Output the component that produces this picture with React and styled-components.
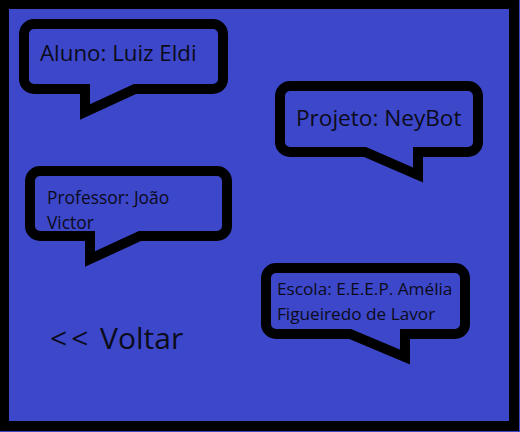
import React from 'react'
import styled, { createGlobalStyle } from 'styled-components'

const BLUE = '#3d47c9'

const GlobalStyle = createGlobalStyle`
  html, body {
    margin: 0;
    padding: 0;
    background: ${BLUE};
  }
  body {
    font-family: 'Open Sans', 'Noto Sans', sans-serif;
    color: #0b0b1a;
  }
`

const Frame = styled.div`
  position: relative;
  box-sizing: border-box;
  width: 519px;
  height: 431px;
  border-style: solid;
  border-color: #000;
  border-width: 9px 10px 10px 9px;
  background: ${BLUE};
`

const BubbleBox = styled.div`
  position: absolute;
  left: ${props => props.$x}px;
  top: ${props => props.$y}px;
  width: ${props => props.$w}px;
  height: ${props => props.$h}px;
  box-sizing: border-box;
  padding: ${props => props.$padTop}px 0 0 ${props => props.$padLeft}px;
`

const Outline = styled.svg`
  position: absolute;
  left: 0;
  top: 0;
  overflow: visible;
`

const Say = styled.p`
  position: relative;
  margin: 0;
  width: ${props => props.$textWidth}px;
  font-size: ${props => props.$size}px;
  line-height: ${props => props.$lh}px;
`

const BackLink = styled.a`
  position: absolute;
  left: 41px;
  top: 311px;
  font-size: 30px;
  line-height: 36px;
  color: #0b0b1a;
  text-decoration: none;
  cursor: pointer;
`

const Arrows = styled.span`
  letter-spacing: 4px;
`

// rect = centerline of the outline; tail = [rightJoin, tipX, tipY, leftJoin]
function Bubble({ rect, tail, text, children }) {
  const [rx, ry, rw, rh] = rect
  const ox = rx - 5
  const oy = ry - 5
  const r = 10
  const R = 5 + rw
  const B = 5 + rh
  const [a, tx, ty, b] = tail
  const d = [
    `M ${5 + r} 5`,
    `H ${R - r}`,
    `A ${r} ${r} 0 0 1 ${R} ${5 + r}`,
    `V ${B - r}`,
    `A ${r} ${r} 0 0 1 ${R - r} ${B}`,
    `H ${a - ox}`,
    `L ${tx - ox} ${ty - oy}`,
    `L ${b - ox} ${B}`,
    `H ${5 + r}`,
    `A ${r} ${r} 0 0 1 5 ${B - r}`,
    `V ${5 + r}`,
    `A ${r} ${r} 0 0 1 ${5 + r} 5`,
    'Z',
  ].join(' ')

  return (
    <BubbleBox
      $x={ox}
      $y={oy}
      $w={rw + 10}
      $h={rh + 10}
      $padTop={text.top - oy}
      $padLeft={text.left - ox}
    >
      <Outline width={rw + 10} height={ty - oy + 10}>
        <path d={d} fill="none" stroke="#000" strokeWidth="10" strokeLinejoin="miter" />
      </Outline>
      <Say $size={text.size} $lh={text.lh} $textWidth={text.width}>
        {children}
      </Say>
    </BubbleBox>
  )
}

const bubbles = [
  {
    id: 'aluno',
    rect: [15, 15, 199, 65],
    tail: [126, 76, 103, 76],
    text: { top: 30, left: 31, size: 22.3, lh: 28, width: 180 },
    label: 'Aluno: Luiz Eldi',
  },
  {
    id: 'projeto',
    rect: [271, 77, 198, 66],
    tail: [409, 409, 166, 356],
    text: { top: 95, left: 287, size: 22.6, lh: 28, width: 185 },
    label: 'Projeto: NeyBot',
  },
  {
    id: 'professor',
    rect: [21, 162, 197, 65],
    tail: [131, 81, 250, 81],
    text: { top: 176, left: 38, size: 17.4, lh: 25, width: 150 },
    label: 'Professor: João Victor',
  },
  {
    id: 'escola',
    rect: [257, 259, 199, 66],
    tail: [396, 396, 348, 341],
    text: { top: 267, left: 268, size: 17.2, lh: 25, width: 188 },
    label: 'Escola: E.E.E.P. Amélia Figueiredo de Lavor',
  },
]

export default function App() {
  return (
    <>
      <GlobalStyle />
      <Frame>
        {bubbles.map(bubble => (
          <Bubble key={bubble.id} rect={bubble.rect} tail={bubble.tail} text={bubble.text}>
            {bubble.label}
          </Bubble>
        ))}
        <BackLink>
          <Arrows>&lt;&lt;</Arrows> Voltar
        </BackLink>
      </Frame>
    </>
  )
}
